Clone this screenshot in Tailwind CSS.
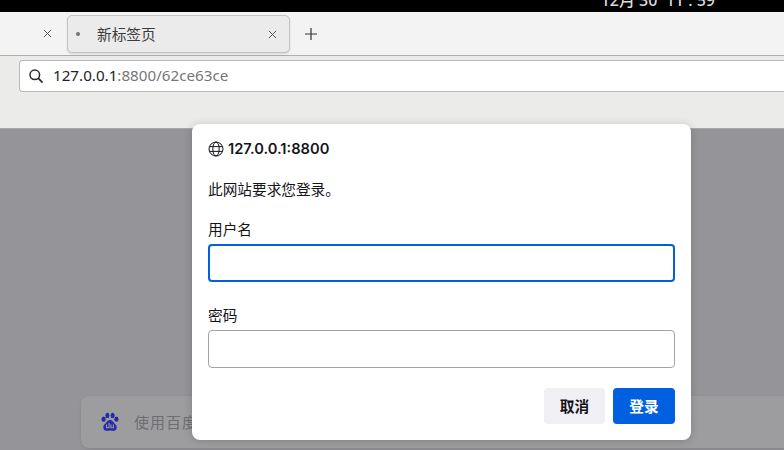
<!DOCTYPE html>
<html lang="zh">
<head>
<meta charset="utf-8">
<script src="https://cdn.jsdelivr.net/npm/@tailwindcss/browser@4"></script>
</head>
<body class="m-0 overflow-hidden">
<div class="relative w-[784px] h-[450px] overflow-hidden flex flex-col bg-[#959498] font-['Noto_Sans_CJK_SC','Noto_Sans',sans-serif]">
  <div class="h-3 shrink-0 bg-black flex items-end justify-end overflow-hidden pr-[69px]">
    <span class="text-[16px] leading-[20px] font-medium text-[#dcdcdc] mb-[2px] whitespace-pre font-['Noto_Sans','Noto_Sans_CJK_SC',sans-serif]">12月 30  11 : 59</span>
  </div>
  <div class="h-11 shrink-0 bg-[#f3f3f3] border-b border-[#b0afad] flex items-center">
    <div class="w-[67px] flex justify-end pr-[15px] items-center">
      <svg class="w-[9px] h-[9px]" viewBox="0 0 10 10"><path d="M1 1l8 8M9 1l-8 8" stroke="#555" stroke-width="1.1"/></svg>
    </div>
    <div class="w-[223px] h-[38px] mt-px bg-[#ebebeb] rounded-[5px] border border-[#c4c4c8] shadow-[0_1px_2px_rgba(0,0,0,0.12)] flex items-center pl-2 pr-[12px]">
      <div class="w-1 h-1 rounded-full bg-[#777] mr-[17px]"></div>
      <span class="text-[14.67px] text-[#3d3d3d] flex-1">新标签页</span>
      <svg class="w-[9px] h-[9px]" viewBox="0 0 10 10"><path d="M1 1l8 8M9 1l-8 8" stroke="#555" stroke-width="1.1"/></svg>
    </div>
    <svg class="w-3 h-3 ml-[15px]" viewBox="0 0 12 12"><path d="M6 0v12M0 6h12" stroke="#333" stroke-width="1.2"/></svg>
  </div>
  <div class="h-[73px] shrink-0 bg-[#ebebe9] border-b border-[#a8a7a7] pt-1 pl-[19px]">
    <div class="h-8 bg-white border border-[#b8b8b6] rounded-l-[4px] border-r-0 flex items-center pl-2">
      <svg class="w-4 h-4" viewBox="0 0 16 16" fill="none"><circle cx="6.8" cy="6.8" r="4.8" stroke="#2a2a2a" stroke-width="1.5"/><path d="M10.4 10.4l4.2 4.2" stroke="#2a2a2a" stroke-width="1.7"/></svg>
      <span class="ml-[9px] mt-[-2px] text-[15.2px] text-[#222] font-['Noto_Sans',sans-serif]">127.0.0.1<span class="text-[#777]">:8800/62ce63ce</span></span>
    </div>
  </div>
  <div class="flex-1 relative pt-[267px] pl-[81px]">
    <div class="h-[52px] bg-[#9d9d9f] rounded-l-[8px] shadow-[0_1px_3px_rgba(0,0,0,0.12)] flex items-center pl-[19px]">
      <svg class="w-5 h-5" viewBox="0 0 20 20" fill="#232aa6">
        <ellipse cx="3.6" cy="7.2" rx="2.1" ry="2.6"/><ellipse cx="7.4" cy="3.4" rx="2" ry="2.7"/><ellipse cx="12.6" cy="3.4" rx="2" ry="2.7"/><ellipse cx="16.4" cy="7.2" rx="2.1" ry="2.6"/>
        <path d="M10 8c2 0 3 1.8 4.3 3.2 1.6 1.5 2.4 2.6 2.4 4.2 0 2.2-1.8 3.4-3.6 3.4-1.3 0-2-.4-3.1-.4s-1.8.4-3.1.4c-1.8 0-3.6-1.2-3.6-3.4 0-1.6.8-2.7 2.4-4.2C7 9.8 8 8 10 8z"/>
        <path d="M6.6 12.6v3.2h2.5v-5M11 12.6v3.2h2.4v-3.2" fill="none" stroke="#9d9d9f" stroke-width="1.1"/>
      </svg>
      <span class="ml-[14px] text-[15px] text-[#6e6e72] tracking-[1px]">使用百度</span>
    </div>
  </div>
  <div class="absolute left-[192px] top-[124px] w-[499px] h-[316px] bg-white rounded-[8px] shadow-[0_1px_8px_rgba(0,0,0,0.18)] px-4 pt-4 pb-[16px] flex flex-col">
    <div class="flex items-center h-[18px] text-[14.67px] font-semibold text-[#15141a] font-['Inter','Noto_Sans',sans-serif]">
      <svg class="w-4 h-4 mr-1 shrink-0" viewBox="0 0 16 16" fill="none" stroke="#15141a" stroke-width="1"><circle cx="8" cy="8" r="7"/><ellipse cx="8" cy="8" rx="3.2" ry="7"/><path d="M1.4 5.6h13.2M1.4 10.4h13.2"/></svg>
      <span>127.0.0.1:8800</span>
    </div>
    <p class="mt-[21px] h-5 text-[14.67px] leading-5 text-[#15141a]">此网站要求您登录。</p>
    <label class="mt-[20px] h-5 text-[14.67px] leading-5 text-[#15141a]">用户名</label>
    <input class="mt-[5px] h-[38px] w-full rounded-[4px] bg-white border-2 border-[#0060df] outline-none">
    <label class="mt-[23px] h-5 text-[14.67px] leading-5 text-[#15141a]">密码</label>
    <input class="mt-[5px] h-[38px] w-full rounded-[4px] bg-white border border-[#a3a3a6] outline-none">
    <div class="mt-5 flex justify-end gap-2">
      <button class="w-[61px] h-9 rounded-[4px] bg-[#f0f0f4] text-[14.67px] font-bold text-[#15141a]">取消</button>
      <button class="w-[62px] h-9 rounded-[4px] bg-[#0060df] text-[14.67px] font-bold text-white">登录</button>
    </div>
  </div>
</div>
</body>
</html>
